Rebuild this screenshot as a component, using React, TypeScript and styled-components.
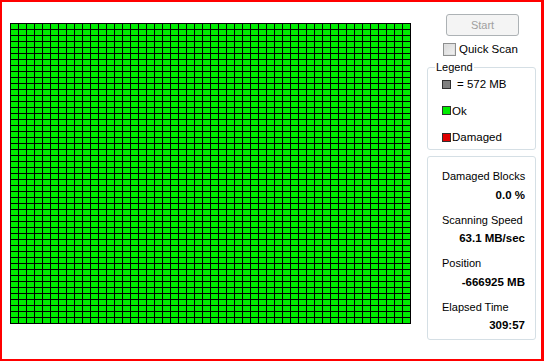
import React from 'react';
import styled, { createGlobalStyle } from 'styled-components';

const GlobalStyle = createGlobalStyle`
  html, body {
    margin: 0;
    padding: 0;
    background: #ffffff;
  }
  body {
    font-family: "Liberation Sans", Arial, sans-serif;
    font-size: 11px;
    color: #000;
  }
`

const COLS = 50
const ROWS = 50

type BlockState = 'ok' | 'damaged' | 'pending'

const blocks: BlockState[] = Array.from({ length: COLS * ROWS }, () => 'ok')

export default function App() {
    return (
        <>
            <GlobalStyle />
            <Frame>
                <MapArea>
                    <BlockMap>
                        {blocks.map((b, i) => <Block key={i} $state={b} />)}
                    </BlockMap>
                </MapArea>
                <Panel>
                    <StartButton disabled>Start</StartButton>
                    <CheckRow>
                        <CheckBox />
                        <span>Quick Scan</span>
                    </CheckRow>
                    <LegendBox>
                        <LegendTitle>Legend</LegendTitle>
                        <LegendList>
                            <LegendItem>
                                <Swatch $state="pending" />
                                <LegendText $gap={6}>= 572 MB</LegendText>
                            </LegendItem>
                            <LegendItem>
                                <Swatch $state="ok" />
                                <LegendText>Ok</LegendText>
                            </LegendItem>
                            <LegendItem>
                                <Swatch $state="damaged" />
                                <LegendText>Damaged</LegendText>
                            </LegendItem>
                        </LegendList>
                    </LegendBox>
                    <StatsBox>
                        <Stat>
                            <StatLabel>Damaged Blocks</StatLabel>
                            <StatValue>0.0 %</StatValue>
                        </Stat>
                        <Stat>
                            <StatLabel>Scanning Speed</StatLabel>
                            <StatValue>63.1 MB/sec</StatValue>
                        </Stat>
                        <Stat>
                            <StatLabel>Position</StatLabel>
                            <StatValue>-666925 MB</StatValue>
                        </Stat>
                        <Stat>
                            <StatLabel>Elapsed Time</StatLabel>
                            <StatValue>309:57</StatValue>
                        </Stat>
                    </StatsBox>
                </Panel>
            </Frame>
        </>
    )
}

const stateColor = (s: BlockState) =>
    s === 'ok' ? '#00ec00' : s === 'damaged' ? '#e00000' : '#808080'

const Frame = styled.div`
    box-sizing: border-box;
    width: 544px;
    height: 361px;
    border-style: solid;
    border-color: #ff0000;
    border-width: 2px 3px 2px 2px;
    display: flex;
    background: #fff;
`

const MapArea = styled.div`
    padding: 21px 0 0 8px;
`

const BlockMap = styled.div`
    display: grid;
    grid-template-columns: repeat(${COLS}, 7px);
    grid-template-rows: repeat(${ROWS}, 5px);
    gap: 1px;
    padding: 1px;
    background: #000;
`

const Block = styled.div<{ $state: BlockState }>`
    background: ${p => stateColor(p.$state)};
`

const Panel = styled.div`
    margin-left: 16px;
    width: 109px;
    display: flex;
    flex-direction: column;
`

const StartButton = styled.button`
    align-self: center;
    margin: 12px 0 0 2px;
    width: 73px;
    height: 22px;
    border: 1px solid #adb2b5;
    border-radius: 3px;
    background: #f4f4f4;
    color: #a0a0a0;
    font-family: inherit;
    font-size: 11px;
    padding: 0;
`

const CheckRow = styled.label`
    display: flex;
    align-items: center;
    gap: 3px;
    margin: 6px 0 0 16px;
    height: 14px;
    font-size: 11.5px;
`

const CheckBox = styled.span`
    box-sizing: border-box;
    width: 13px;
    height: 13px;
    border: 1px solid #8e8f8f;
    background: linear-gradient(135deg, #d8d8d8, #f2f2f2);
    box-shadow: inset 0 0 0 1px #e0e0e0;
`

const LegendBox = styled.fieldset`
    box-sizing: border-box;
    margin: 5px 0 0 0;
    padding: 0 0 0 14px;
    height: 89px;
    border: 1px solid #d5dfe5;
    border-radius: 3px;
`

const LegendTitle = styled.legend`
    padding: 0 1px;
    margin-left: -7px;
    font-size: 11px;
`

const LegendList = styled.div`
    display: flex;
    flex-direction: column;
    margin-top: -2px;
`

const LegendItem = styled.div`
    display: flex;
    align-items: center;
    height: 26.5px;
`

const Swatch = styled.span<{ $state: BlockState }>`
    box-sizing: border-box;
    width: 9px;
    height: 9px;
    border: 1px solid #303030;
    background: ${p => stateColor(p.$state)};
`

const LegendText = styled.span<{ $gap?: number }>`
    margin-left: ${p => p.$gap ?? 1}px;
    font-size: 11.5px;
`

const StatsBox = styled.div`
    box-sizing: border-box;
    margin-top: 6px;
    height: 184px;
    border: 1px solid #d5dfe5;
    border-radius: 3px;
    padding: 12px 10px 0 14px;
    display: flex;
    flex-direction: column;
    gap: 11px;
`

const Stat = styled.div`
    display: flex;
    flex-direction: column;
    gap: 4.5px;
    white-space: nowrap;
`

const StatLabel = styled.div`
    font-size: 11px;
    line-height: 14px;
`

const StatValue = styled.div`
    text-align: right;
    font-weight: bold;
    font-size: 11.5px;
    line-height: 14px;
`
